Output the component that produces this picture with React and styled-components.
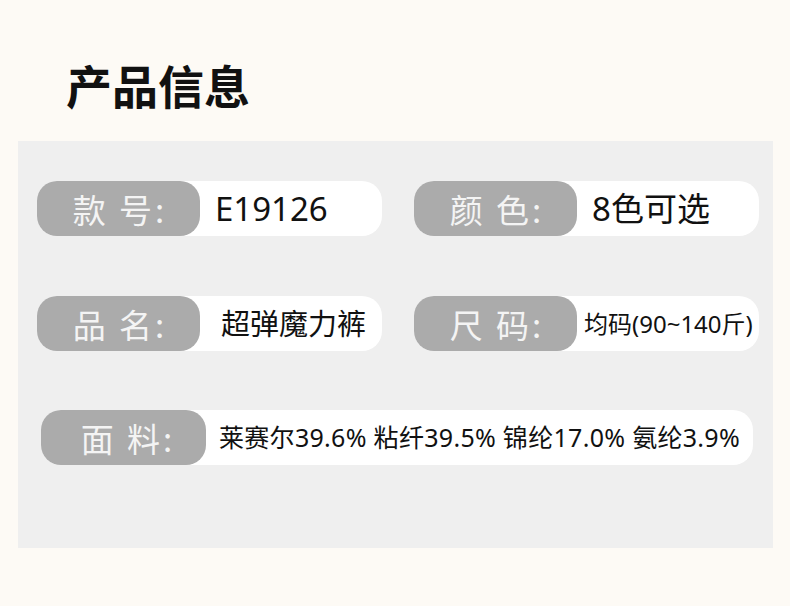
import React from "react";
import styled, { createGlobalStyle } from "styled-components";

const GlobalStyle = createGlobalStyle`
	html, body {
		margin: 0;
		padding: 0;
		background: #fdfaf5;
	}
	body {
		width: 790px;
		height: 606px;
		overflow: hidden;
		font-family: "Noto Sans", "Noto Sans CJK SC", sans-serif;
	}
`;

const Page = styled.div`
	width: 790px;
	height: 606px;
	background: #fdfaf5;
	padding-top: 61px;
	box-sizing: border-box;
`;

const Title = styled.h1`
	margin: 0 0 34px 66px;
	font-family: "Noto Sans CJK SC", sans-serif;
	font-size: 46px;
	line-height: 46px;
	font-weight: 700;
	color: #111;
`;

const Panel = styled.div`
	margin-left: 18px;
	width: 755px;
	height: 407px;
	background: #efefef;
	box-sizing: border-box;
	padding: 40px 0 0 19px;
	display: grid;
	grid-template-columns: 345px 345px;
	column-gap: 32px;
	row-gap: 60px;
	align-content: start;
`;

const Pill = styled.div`
	display: flex;
	align-items: center;
	height: 55px;
	background: #fff;
	border-radius: 20px;
	grid-column: ${(p) => (p.wide ? "1 / span 2" : "auto")};
	margin-left: ${(p) => (p.wide ? "4px" : "0")};
	width: ${(p) => (p.wide ? "712px" : "auto")};
	margin-top: ${(p) => (p.wide ? "-1px" : "0")};
`;

const Label = styled.div`
	flex: none;
	width: ${(p) => p.w || 163}px;
	height: 100%;
	background: #ababab;
	border-radius: 20px;
	display: flex;
	align-items: center;
	justify-content: center;
	padding-left: ${(p) => p.shift || 3}px;
	box-sizing: border-box;
	font-family: "Noto Sans CJK SC", sans-serif;
	font-size: 33px;
	letter-spacing: 3px;
	color: #f4f4f4;
	white-space: pre;
`;

const Value = styled.div`
	padding-left: ${(p) => p.pad}px;
	font-family: "Noto Sans", "Noto Sans CJK SC", sans-serif;
	font-size: ${(p) => p.size}px;
	letter-spacing: ${(p) => p.track || 0}px;
	color: #111;
	white-space: nowrap;
	line-height: 1;
`;

const rows = [
	{ label: "款 号:", value: "E19126", size: 33, pad: 15 },
	{ label: "颜 色:", value: "8色可选", size: 33, pad: 15 },
	{ label: "品 名:", value: "超弹魔力裤", size: 29, pad: 21 },
	{ label: "尺 码:", value: "均码(90~140斤)", size: 24, pad: 7 },
];

export default function App() {
	return (
		<>
			<GlobalStyle />
			<Page>
				<Title>产品信息</Title>
				<Panel>
					{rows.map((r) => (
						<Pill key={r.label}>
							<Label>{r.label}</Label>
							<Value size={r.size} pad={r.pad}>
								{r.value}
							</Value>
						</Pill>
					))}
					<Pill wide>
						<Label w={165} shift={9}>面 料:</Label>
						<Value size={25} track={0.3} pad={13}>
							莱赛尔39.6% 粘纤39.5% 锦纶17.0% 氨纶3.9%
						</Value>
					</Pill>
				</Panel>
			</Page>
		</>
	);
}
